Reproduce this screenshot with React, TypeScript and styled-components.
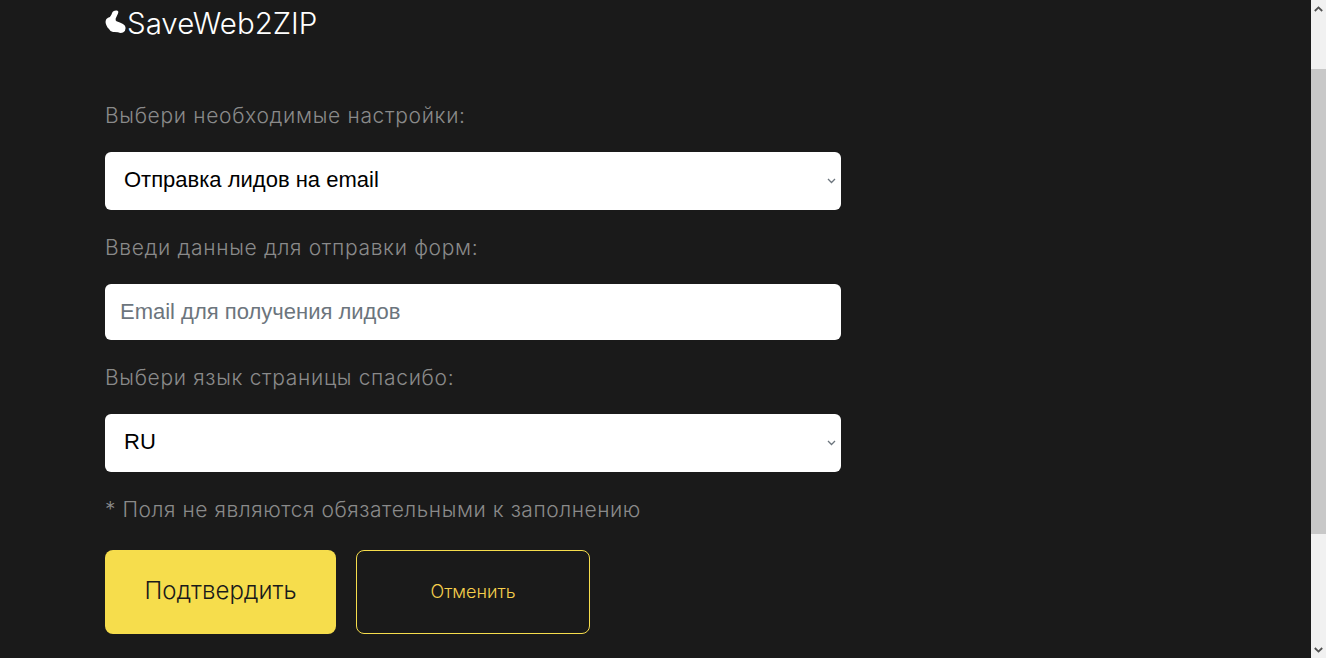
import React from "react"
import styled, { createGlobalStyle } from "styled-components"

const GlobalStyle = createGlobalStyle`
	html, body {
		margin: 0;
		height: 100%;
		overflow: hidden;
	}
	#root {
		height: 100%;
	}
`

const Page = styled.div`
	display: flex;
	height: 658px;
	background: #1a1a1a;
	font-family: "Inter", "Noto Sans", sans-serif;
`

const Main = styled.main`
	flex: 1;
	padding: 8px 0 0 105px;
	overflow: hidden;
`

const Logo = styled.div`
	display: flex;
	align-items: center;
	gap: 1px;
	height: 30px;
	color: #fff;
	font-size: 29.5px;
	font-weight: 300;

	svg {
		margin-bottom: 2px;
	}
`

const Form = styled.form`
	display: flex;
	flex-direction: column;
	width: 736px;
	margin-top: 65px;
`

const Label = styled.label`
	color: #8a8a8a;
	font-size: 21px;
	font-weight: 300;
	letter-spacing: 0.67px;
	line-height: 26px;
	margin-bottom: 23px;
`

const SelectWrap = styled.div`
	position: relative;
	margin-bottom: 25px;
`

const Select = styled.select`
	display: block;
	width: 100%;
	height: 58px;
	padding: 0 30px 3px 19px;
	border: 0;
	border-radius: 6px;
	background: #fff;
	color: #000;
	font-family: "Liberation Sans", Arial, sans-serif;
	font-size: 22px;
	appearance: none;
`

const SelectChevron = styled.svg`
	position: absolute;
	top: 26px;
	right: 5px;
	color: #6c757d;
	pointer-events: none;
`

const Input = styled.input`
	height: 56px;
	box-sizing: border-box;
	padding: 0 15px;
	margin-bottom: 25px;
	border: 0;
	border-radius: 6px;
	background: #fff;
	font-family: "Liberation Sans", Arial, sans-serif;
	font-size: 22px;

	&::placeholder {
		color: #6c757d;
		opacity: 1;
	}
`

const Note = styled.p`
	margin: 0 0 27px;
	color: #8a8a8a;
	font-size: 21px;
	font-weight: 300;
	letter-spacing: 0.55px;
	line-height: 26px;
`

const Buttons = styled.div`
	display: flex;
	gap: 20px;
`

const Button = styled.button<{ $outline?: boolean }>`
	height: 84px;
	width: ${(props) => (props.$outline ? "234px" : "231px")};
	border: ${(props) => (props.$outline ? "1px solid #f6dd4c" : "0")};
	border-radius: 8px;
	background: ${(props) => (props.$outline ? "transparent" : "#f6dd4c")};
	color: ${(props) => (props.$outline ? "#f6cf4c" : "#1a1a1a")};
	font-family: inherit;
	font-size: ${(props) => (props.$outline ? "18px" : "24px")};
	font-weight: 300;
	padding: 0 0 ${(props) => (props.$outline ? "1px" : "3px")};
`

const Scrollbar = styled.div`
	display: flex;
	flex-direction: column;
	flex: none;
	width: 15px;
	background: #f1f1f1;
`

const ScrollArrow = styled.div`
	display: flex;
	align-items: center;
	justify-content: center;
	flex: none;
	height: 17px;
	color: #505050;
`

const ScrollTrack = styled.div`
	display: flex;
	flex-direction: column;
	flex: 1;
	padding: 52px 0 107px;
`

const ScrollThumb = styled.div`
	flex: 1;
	background: #c8c8c8;
`

const LogoMark = () => (
	<svg width="21" height="24" viewBox="0 0 21 24" aria-hidden="true">
		<path
			fill="#fff"
			d="M8 1.500Q10 .2 12 .6 14 1.200 13 3.400 11.800 6 10.700 8.500 10.200 10.500 11.500 11.200 15 12.500 18 14 20.700 15.500 20.600 18 20.700 21 18 22.600 15.500 23.500 13 22.300 10.500 21.800 8 22 5 21.500 4 19 2.300 17.500 1.500 15.500 .2 13 .6 11 1 8.500 3 7.800 5.500 7.200 6.500 4.500 7 2.500 8 1.500Z"
		/>
	</svg>
)

const Chevron = () => (
	<SelectChevron width="9" height="6" viewBox="0 0 9 6" aria-hidden="true">
		<path d="M1 1 4.500 4.500 8 1" fill="none" stroke="currentColor" strokeWidth="1.300" />
	</SelectChevron>
)

const App: React.FC = () => {
	return (
		<Page>
			<GlobalStyle />
			<Main>
				<Logo>
					<LogoMark />
					SaveWeb2ZIP
				</Logo>
				<Form>
					<Label>Выбери необходимые настройки:</Label>
					<SelectWrap>
						<Select defaultValue="email">
							<option value="email">Отправка лидов на email</option>
						</Select>
						<Chevron />
					</SelectWrap>
					<Label>Введи данные для отправки форм:</Label>
					<Input placeholder="Email для получения лидов" />
					<Label>Выбери язык страницы спасибо:</Label>
					<SelectWrap>
						<Select defaultValue="ru">
							<option value="ru">RU</option>
						</Select>
						<Chevron />
					</SelectWrap>
					<Note>* Поля не являются обязательными к заполнению</Note>
					<Buttons>
						<Button type="button">Подтвердить</Button>
						<Button type="button" $outline>
							Отменить
						</Button>
					</Buttons>
				</Form>
			</Main>
			<Scrollbar>
				<ScrollArrow>
					<svg width="9" height="6" viewBox="0 0 9 6" aria-hidden="true">
						<path d="M0.800 5 4.500 1.400 8.200 5" fill="none" stroke="currentColor" strokeWidth="1.800" />
					</svg>
				</ScrollArrow>
				<ScrollTrack>
					<ScrollThumb />
				</ScrollTrack>
				<ScrollArrow>
					<svg width="9" height="6" viewBox="0 0 9 6" aria-hidden="true">
						<path d="M0.800 1 4.500 4.600 8.200 1" fill="none" stroke="currentColor" strokeWidth="1.800" />
					</svg>
				</ScrollArrow>
			</Scrollbar>
		</Page>
	)
}

export default App
